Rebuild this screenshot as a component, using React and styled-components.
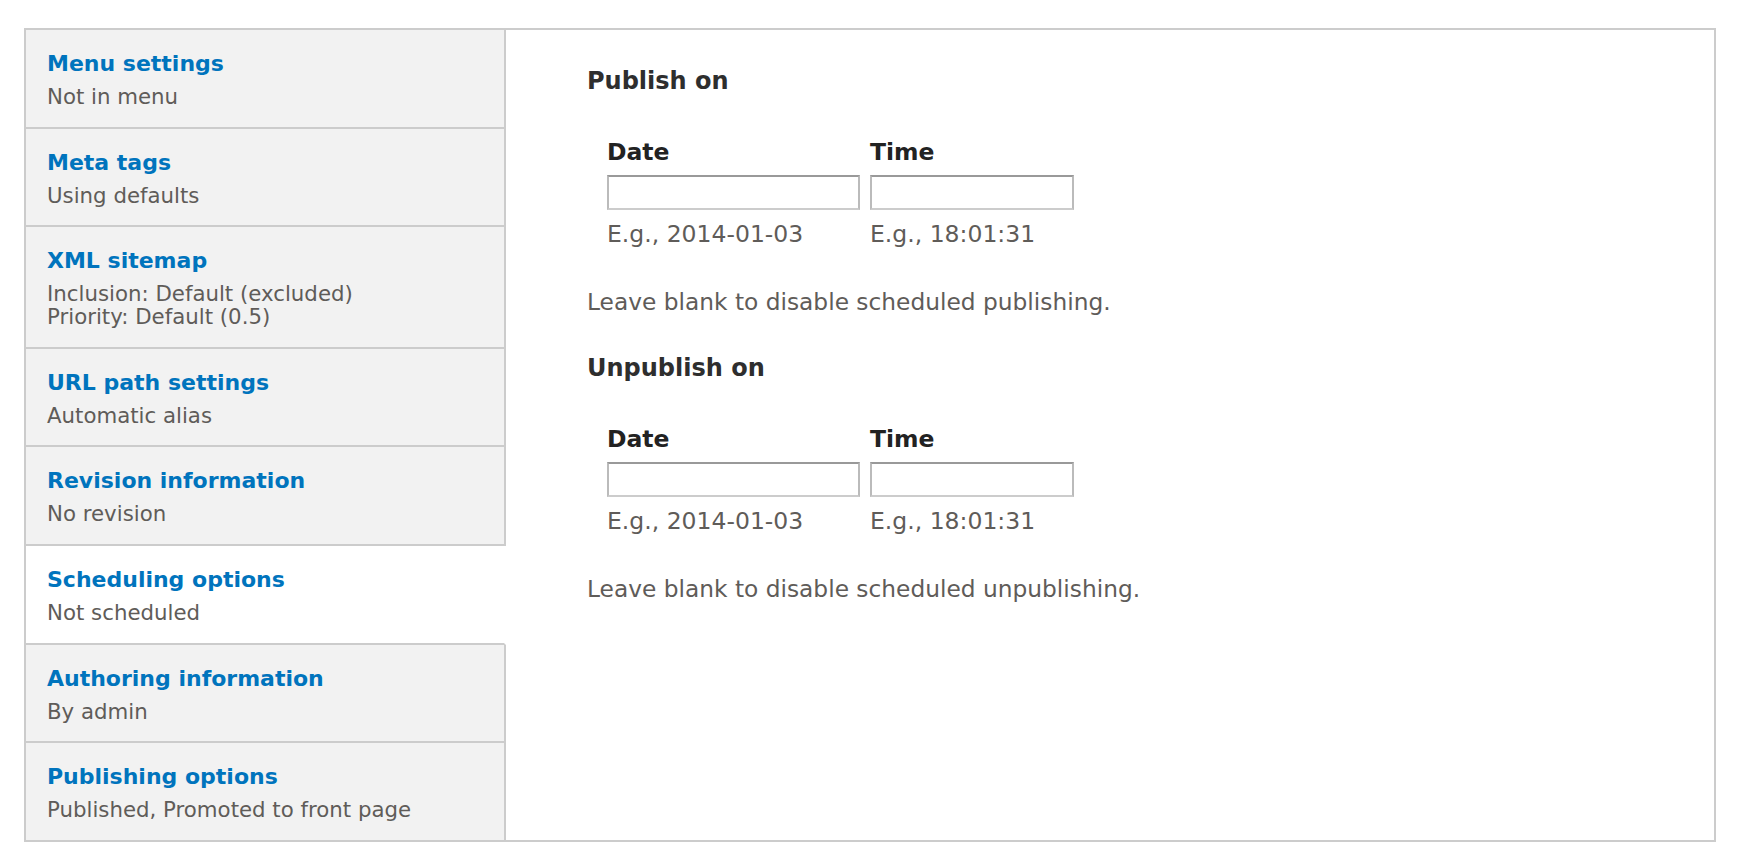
import React from 'react';
import styled, { createGlobalStyle } from 'styled-components';

const GlobalStyle = createGlobalStyle`
  html, body {
    margin: 0;
    padding: 0;
    background: #fff;
  }
  body {
    font-family: 'DejaVu Sans', 'Liberation Sans', sans-serif;
    color: #333;
  }
`;

const Page = styled.div`
  padding: 28px 34px 22px 24px;
`;

const TabsBox = styled.div`
  display: flex;
  border: 2px solid #ccc;
  background: #fff;
`;

const TabList = styled.ul`
  list-style: none;
  margin: 0;
  padding: 0;
  width: 480px;
  flex-shrink: 0;
  display: flex;
  flex-direction: column;
  background: #fff;
`;

const TabItem = styled.li`
  padding: 19px 20px 18.6px 21px;
  background: ${(p) => (p.$active ? '#fff' : '#f2f2f2')};
  border-right: 2px solid ${(p) => (p.$active ? '#fff' : '#ccc')};
  border-bottom: 2px solid #ccc;
  cursor: pointer;

  &:last-child {
    border-bottom: none;
    flex-grow: 1;
  }
`;

const TabTitle = styled.a`
  display: block;
  font-size: 22px;
  line-height: 30px;
  font-weight: bold;
  color: #0074bd;
  text-decoration: none;
`;

const TabSummary = styled.div`
  margin-top: 6px;
  font-size: 21.3px;
  line-height: 23px;
  color: #5f5c59;
`;

const Pane = styled.div`
  flex: 1;
  padding: 37px 40px 40px 81px;
`;

const Fieldset = styled.section`
  & + & {
    margin-top: 39px;
  }
`;

const Legend = styled.h4`
  margin: 0;
  font-size: 24px;
  line-height: 28px;
  font-weight: bold;
  color: #2e2e2e;
`;

const FieldRow = styled.div`
  display: flex;
  gap: 10px;
  margin-top: 44px;
  padding-left: 20px;
`;

const Field = styled.div`
  display: flex;
  flex-direction: column;
`;

const Label = styled.label`
  font-size: 23.5px;
  line-height: 26px;
  font-weight: bold;
  color: #222;
  margin-bottom: 10px;
`;

const TextInput = styled.input`
  box-sizing: border-box;
  width: ${(p) => p.$width}px;
  height: 35px;
  margin: 0;
  padding: 4px 6px;
  border: 2px solid #bbb;
  border-top-color: #999;
  border-bottom-color: #ccc;
  border-radius: 0;
  background: #fff;
  font: inherit;
`;

const Hint = styled.div`
  margin-top: 11px;
  font-size: 23.5px;
  line-height: 26px;
  color: #5f5c59;
`;

const Description = styled.div`
  margin-top: 42px;
  font-size: 23.3px;
  line-height: 26px;
  color: #5f5c59;
`;

const tabs = [
  { title: 'Menu settings', summary: ['Not in menu'] },
  { title: 'Meta tags', summary: ['Using defaults'] },
  { title: 'XML sitemap', summary: ['Inclusion: Default (excluded)', 'Priority: Default (0.5)'] },
  { title: 'URL path settings', summary: ['Automatic alias'] },
  { title: 'Revision information', summary: ['No revision'] },
  { title: 'Scheduling options', summary: ['Not scheduled'], active: true },
  { title: 'Authoring information', summary: ['By admin'] },
  { title: 'Publishing options', summary: ['Published, Promoted to front page'] },
];

const schedules = [
  { legend: 'Publish on', help: 'Leave blank to disable scheduled publishing.' },
  { legend: 'Unpublish on', help: 'Leave blank to disable scheduled unpublishing.' },
];

const DateTimeField = ({ legend, help }) => (
  <Fieldset>
    <Legend>{legend}</Legend>
    <FieldRow>
      <Field>
        <Label>Date</Label>
        <TextInput type="text" $width={253} />
        <Hint>E.g., 2014-01-03</Hint>
      </Field>
      <Field>
        <Label>Time</Label>
        <TextInput type="text" $width={204} />
        <Hint>E.g., 18:01:31</Hint>
      </Field>
    </FieldRow>
    <Description>{help}</Description>
  </Fieldset>
);

export default function App() {
  return (
    <>
      <GlobalStyle />
      <Page>
        <TabsBox>
          <TabList>
            {tabs.map((t) => (
              <TabItem key={t.title} $active={t.active}>
                <TabTitle>{t.title}</TabTitle>
                <TabSummary>
                  {t.summary.map((line) => (
                    <div key={line}>{line}</div>
                  ))}
                </TabSummary>
              </TabItem>
            ))}
          </TabList>
          <Pane>
            {schedules.map((s) => (
              <DateTimeField key={s.legend} {...s} />
            ))}
          </Pane>
        </TabsBox>
      </Page>
    </>
  );
}
